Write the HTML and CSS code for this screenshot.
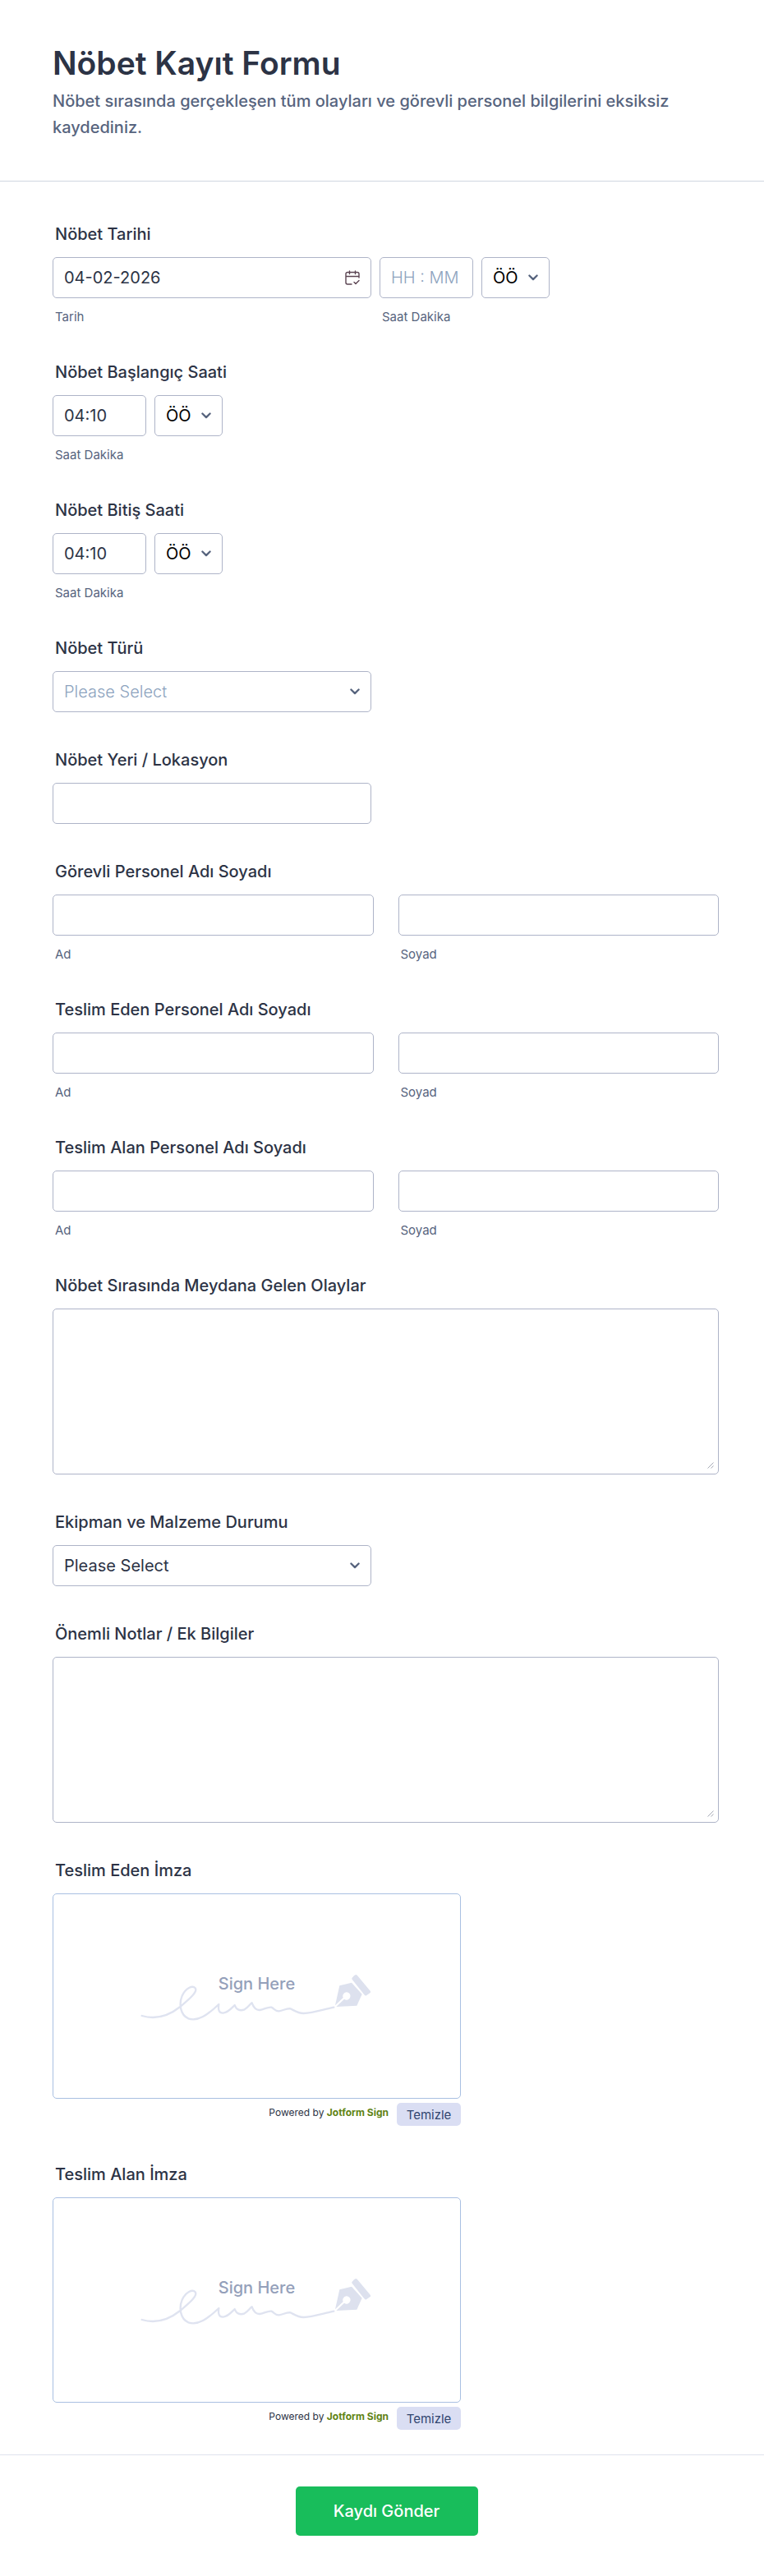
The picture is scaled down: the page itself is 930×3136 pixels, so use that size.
FILE: index.html
```html
<!DOCTYPE html>
<html lang="tr">
<head>
<meta charset="utf-8">
<meta name="viewport" content="width=device-width, initial-scale=1">
<title>Nöbet Kayıt Formu</title>
<link rel="stylesheet" href="styles.css">
</head>
<body>
<svg class="defs" width="0" height="0" aria-hidden="true">
  <symbol id="chevron" viewBox="0 0 12 8">
    <path d="M1.4 1.5 6 6.1l4.600-4.600" fill="none" stroke="currentColor" stroke-width="2.300" stroke-linecap="round" stroke-linejoin="round"/>
  </symbol>
  <symbol id="signature" viewBox="60 31 849 180">
    <path d="M65 193C110 206 160 196 205 160C240 130 270 105 260 92C250 80 225 92 212 120C200 150 205 190 235 203C270 215 305 190 346 151C343 170 346 184 362 183C382 180 393 164 404 154C410 172 424 176 440 170C454 162 460 150 467 146C472 160 480 173 496 172C512 170 524 160 538 162C548 166 552 177 566 176C582 174 592 165 608 167C622 174 634 184 656 184C690 183 730 169 766 162" fill="none" stroke="#dfe3f0" stroke-width="7" stroke-linecap="round" stroke-linejoin="round"/>
    <path d="M846 43Q841 44 833 54Q830 58 834 62L877 116Q881 121 885 119L899 109Q902 106 899 102L852 46Q849 42 846 43Z" fill="#dde1ee"/>
    <path d="M787 83L831 72L869 114L850 156L775 160L804 132A14 14 0 1 0 800 127L771 155Z" fill="#dde1ee"/>
  </symbol>
</svg>
<form class="form">
  <header class="form-header">
    <h1 class="title">Nöbet Kayıt Formu</h1>
    <p class="subtitle">Nöbet sırasında gerçekleşen tüm olayları ve görevli personel bilgilerini eksiksiz kaydediniz.</p>
  </header>

  <main class="fields">
    <section class="field">
      <label class="label" for="date">Nöbet Tarihi</label>
      <div class="row">
        <div class="part half">
          <div class="control">
            <input class="input" id="date" type="text" value="04-02-2026">
            <svg class="calendar" viewBox="0 0 18 18" aria-hidden="true"><path d="M1 7.500h16M17 9V4.500a2 2 0 0 0-2-2H3a2 2 0 0 0-2 2V15a2 2 0 0 0 2 2h5M5.500 1v3.500M12.500 1v3.500M11 14.500l2 2L17 12.500" fill="none" stroke="currentColor" stroke-width="1.400" stroke-linecap="round" stroke-linejoin="round"/></svg>
          </div>
          <label class="sub" for="date">Tarih</label>
        </div>
        <div class="part time">
          <input class="input" id="time" type="text" placeholder="HH : MM">
          <label class="sub" for="time">Saat Dakika</label>
        </div>
        <div class="control period">
          <select class="input select dark" aria-label="ÖÖ / ÖS"><option>ÖÖ</option><option>ÖS</option></select>
          <svg class="chevron" aria-hidden="true"><use href="#chevron"/></svg>
        </div>
      </div>
    </section>

    <section class="field">
      <label class="label" for="start">Nöbet Başlangıç Saati</label>
      <div class="row">
        <div class="part time">
          <input class="input" id="start" type="text" value="04:10">
          <label class="sub" for="start">Saat Dakika</label>
        </div>
        <div class="control period">
          <select class="input select dark" aria-label="ÖÖ / ÖS"><option>ÖÖ</option><option>ÖS</option></select>
          <svg class="chevron" aria-hidden="true"><use href="#chevron"/></svg>
        </div>
      </div>
    </section>

    <section class="field">
      <label class="label" for="end">Nöbet Bitiş Saati</label>
      <div class="row">
        <div class="part time">
          <input class="input" id="end" type="text" value="04:10">
          <label class="sub" for="end">Saat Dakika</label>
        </div>
        <div class="control period">
          <select class="input select dark" aria-label="ÖÖ / ÖS"><option>ÖÖ</option><option>ÖS</option></select>
          <svg class="chevron" aria-hidden="true"><use href="#chevron"/></svg>
        </div>
      </div>
    </section>

    <section class="field">
      <label class="label" for="type">Nöbet Türü</label>
      <div class="control half">
        <select class="input select empty" id="type"><option>Please Select</option></select>
        <svg class="chevron" aria-hidden="true"><use href="#chevron"/></svg>
      </div>
    </section>

    <section class="field">
      <label class="label" for="place">Nöbet Yeri / Lokasyon</label>
      <div class="control half"><input class="input" id="place" type="text"></div>
    </section>

    <section class="field">
      <label class="label" for="staff-first">Görevli Personel Adı Soyadı</label>
      <div class="names">
        <div class="part"><input class="input" id="staff-first" type="text"><label class="sub" for="staff-first">Ad</label></div>
        <div class="part"><input class="input" id="staff-last" type="text"><label class="sub" for="staff-last">Soyad</label></div>
      </div>
    </section>

    <section class="field">
      <label class="label" for="giver-first">Teslim Eden Personel Adı Soyadı</label>
      <div class="names">
        <div class="part"><input class="input" id="giver-first" type="text"><label class="sub" for="giver-first">Ad</label></div>
        <div class="part"><input class="input" id="giver-last" type="text"><label class="sub" for="giver-last">Soyad</label></div>
      </div>
    </section>

    <section class="field">
      <label class="label" for="taker-first">Teslim Alan Personel Adı Soyadı</label>
      <div class="names">
        <div class="part"><input class="input" id="taker-first" type="text"><label class="sub" for="taker-first">Ad</label></div>
        <div class="part"><input class="input" id="taker-last" type="text"><label class="sub" for="taker-last">Soyad</label></div>
      </div>
    </section>

    <section class="field">
      <label class="label" for="events">Nöbet Sırasında Meydana Gelen Olaylar</label>
      <div class="control"><textarea class="input area" id="events"></textarea><svg class="grip" viewBox="0 0 8 8" aria-hidden="true"><path d="M0.500 7.500l7-7M4.500 7.500l3-3" stroke="currentColor"/></svg></div>
    </section>

    <section class="field">
      <label class="label" for="equipment">Ekipman ve Malzeme Durumu</label>
      <div class="control half">
        <select class="input select" id="equipment"><option>Please Select</option></select>
        <svg class="chevron" aria-hidden="true"><use href="#chevron"/></svg>
      </div>
    </section>

    <section class="field">
      <label class="label" for="notes">Önemli Notlar / Ek Bilgiler</label>
      <div class="control"><textarea class="input area" id="notes"></textarea><svg class="grip" viewBox="0 0 8 8" aria-hidden="true"><path d="M0.500 7.500l7-7M4.500 7.500l3-3" stroke="currentColor"/></svg></div>
    </section>

    <section class="field">
      <h2 class="label">Teslim Eden İmza</h2>
      <div class="sign">
        <div class="pad">
          <svg class="signature" aria-hidden="true"><use href="#signature"/></svg>
          <span class="sign-text">Sign Here</span>
        </div>
        <div class="sign-foot">
          <span class="powered">Powered by <a href="#">Jotform Sign</a></span>
          <button class="clear" type="button">Temizle</button>
        </div>
      </div>
    </section>

    <section class="field">
      <h2 class="label">Teslim Alan İmza</h2>
      <div class="sign">
        <div class="pad">
          <svg class="signature" aria-hidden="true"><use href="#signature"/></svg>
          <span class="sign-text">Sign Here</span>
        </div>
        <div class="sign-foot">
          <span class="powered">Powered by <a href="#">Jotform Sign</a></span>
          <button class="clear" type="button">Temizle</button>
        </div>
      </div>
    </section>
  </main>

  <footer class="form-footer">
    <button class="submit" type="submit">Kaydı Gönder</button>
  </footer>
</form>
</body>
</html>
```

FILE: styles.css
```css
* { box-sizing: border-box; }

body {
  margin: 0;
  background: #fff;
  color: #2c3345;
  font-family: Inter, "Liberation Sans", sans-serif;
  font-size: 20px;
}

.defs { display: block; }

.form-header {
  padding: 53px 64px 49px;
  border-bottom: 1px solid #d0d7e1;
}

.title {
  margin: 0;
  font-size: 39px;
  font-weight: 600;
  line-height: 48px;
}

.subtitle {
  margin: 6px 0 0;
  color: #57647e;
  font-weight: 500;
  line-height: 32px;
}

.fields {
  display: flex;
  flex-direction: column;
  gap: 46px;
  padding: 52px 55px 29px 64px;
}

.label {
  display: block;
  margin: 0 0 16px;
  padding-left: 3px;
  font-size: 20px;
  font-weight: 500;
  line-height: 24px;
}

.row { display: flex; gap: 10px; align-items: flex-start; }

.names { display: grid; grid-template-columns: 1fr 1fr; gap: 30px; }

.half { width: 388px; max-width: 100%; }
.time { width: 114px; }
.period { width: 83px; }

.input {
  display: block;
  width: 100%;
  height: 50px;
  margin: 0;
  padding: 0 13px;
  border: 1px solid #aeb4c8;
  border-radius: 5px;
  background: #fff;
  color: #2c3345;
  font: inherit;
}

.input::placeholder { color: #8da3be; font-weight: 300; opacity: 1; }

.select { appearance: none; }
.dark { color: #000; }
.empty { color: #8da3be; font-weight: 300; }

.area { height: 202px; padding: 13px; resize: none; }

.sub {
  display: block;
  margin-top: 14px;
  padding-left: 3px;
  color: #57647e;
  font-size: 15px;
  line-height: 18px;
}

.control { display: grid; align-items: center; }
.control > * { grid-area: 1 / 1; }
.control > svg { justify-self: end; pointer-events: none; }

.chevron { width: 12px; height: 8px; margin-right: 14px; color: #57647e; }
.calendar { width: 18px; height: 18px; margin-right: 14px; color: #5b4452; }
.grip { align-self: end; width: 8px; height: 8px; margin: 0 6px 7px 0; color: #a5a9b5; }

.sign { width: 497px; max-width: 100%; }

.pad {
  display: grid;
  place-items: center;
  height: 250px;
  border: 1px solid #a9c0e2;
  border-radius: 5px;
}

.pad > * { grid-area: 1 / 1; }
.signature { width: 283px; height: 60px; }

.sign-text {
  margin-bottom: 30px;
  color: #94a0ba;
  font-weight: 500;
  line-height: 24px;
}

.sign-foot {
  display: flex;
  justify-content: flex-end;
  align-items: flex-start;
  gap: 10px;
  padding: 5px 0 1px;
}

.powered { font-size: 12px; line-height: 24px; }
.powered a { color: #5f8315; font-weight: 700; text-decoration: none; }

.clear {
  width: 78px;
  height: 28px;
  padding: 0;
  border: 0;
  border-radius: 5px;
  background: #dadef3;
  color: #31456f;
  font: inherit;
  font-size: 15px;
}

.form-footer {
  display: flex;
  justify-content: center;
  padding: 38px 53px 48px 64px;
  border-top: 1px solid #dfe2ee;
}

.submit {
  min-width: 222px;
  height: 60px;
  border: 0;
  border-radius: 5px;
  background: #18bd5b;
  color: #fff;
  font: inherit;
  font-weight: 500;
}
```
